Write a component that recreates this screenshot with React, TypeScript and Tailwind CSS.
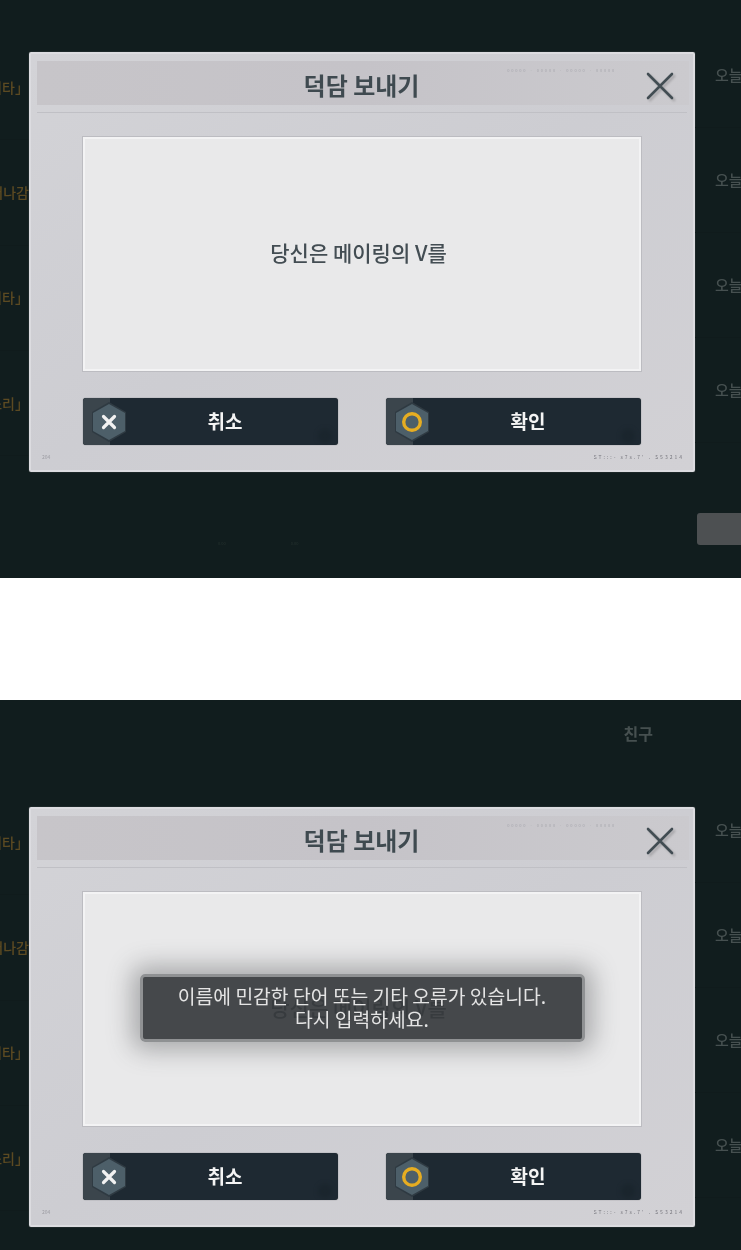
import React from "react";

function Hex({ kind }: { kind: "x" | "o" }) {
  return (
    <svg width="50" height="47" viewBox="0 0 50 47" className="shrink-0">
      <rect x="0" y="0" width="27" height="47" fill="#3b454c" />
      <polygon points="26,4 43,14 43,34 26,44 9,34 9,14" fill="#2f3a42" />
      <polygon points="26,6 42,15 42,33 26,42 10,33 10,15" fill="#4d5f69" />
      {kind === "x" ? (
        <path d="M20.5 18.5 L31.5 29.5 M31.5 18.5 L20.5 29.5" stroke="#f2f2f2" strokeWidth="3.2" strokeLinecap="round" />
      ) : (
        <circle cx="26" cy="24" r="8.3" fill="none" stroke="#e6ad22" strokeWidth="3.4" />
      )}
    </svg>
  );
}

function ActionButton({ kind, label }: { kind: "x" | "o"; label: string }) {
  return (
    <div className="relative flex h-[47px] w-[255px] items-center overflow-hidden rounded-[3px] bg-[#1e2932] shadow-[0_0_1px_#555]">
      <Hex kind={kind} />
      <span className="absolute bottom-[2px] right-[6px] h-[14px] w-[14px] rounded-full bg-[#1a252d] blur-[2px]" />
      <span className="flex-1 pr-[21px] text-center text-[19px] font-bold text-[#f4f4f4]">{label}</span>
    </div>
  );
}

function Modal({ toast }: { toast: boolean }) {
  return (
    <div className="box-border h-[420px] w-[666px] rounded-[2px] border-2 border-[#dcdce0] bg-gradient-to-br from-[#d3d3d7] via-[#cdcdd2] to-[#d2d1d5] shadow-[0_0_1px_#8a8d90]">
      <div className="ml-[6px] mr-[4px] mt-[7px] grid h-[44px] grid-cols-[1fr_auto_1fr] bg-gradient-to-r from-[#c7c5c9] via-[#c5c3c8] to-[#cbcace]">
        <div />
        <div className="pr-[3px] pt-[6px] text-[24px] font-bold leading-[36px] text-[#3f4a50]">덕담 보내기</div>
        <div className="flex items-start justify-end pr-[15px]">
          <span className="mr-[30px] mt-[5px] whitespace-nowrap text-[4px] leading-[8px] tracking-[1.8px] text-[#a8a8ae]">00000 · 00000 · 00000 · 00000</span>
          <svg width="28" height="28" viewBox="0 0 28 28" className="mt-[11px] drop-shadow-[2px_2px_1px_rgba(0,0,0,0.18)]">
            <path d="M2 2 L26 26 M26 2 L2 26" stroke="#424d53" strokeWidth="2.6" strokeLinecap="round" />
          </svg>
        </div>
      </div>
      <div className="mx-[6px] mt-[7px] h-px bg-[#c0c0c5]" />
      <div className="relative ml-[52px] mt-[24px] box-border flex h-[234px] w-[558px] items-center justify-center border-2 border-[#f3f3f4] bg-[#e9e9ea] pb-[2px] pr-[7px] text-[21px] font-medium text-[#434d53] shadow-[0_0_0_1px_#bcbcc1]">
        당신은 메이링의 V를
        {toast && (
          <div className="absolute inset-0 flex items-center justify-center pb-[3px]">
            <div className="box-border flex h-[68px] w-[445px] flex-col items-center justify-center rounded-[5px] border-[3px] border-[#8f9193] bg-[#36393d]/[0.92] text-[19.3px] font-normal leading-[23px] text-[#e4e4e4] shadow-[0_0_24px_8px_rgba(70,72,76,0.4)]">
              <span>이름에 민감한 단어 또는 기타 오류가 있습니다.</span>
              <span>다시 입력하세요.</span>
            </div>
          </div>
        )}
      </div>
      <div className="ml-[52px] mt-[27px] flex gap-[48px]">
        <ActionButton kind="x" label="취소" />
        <ActionButton kind="o" label="확인" />
      </div>
      <div className="mt-[8px] flex justify-between pl-[11px] pr-[9px] text-[5px] leading-[8px] text-[#9c9ca2]">
        <span>204</span>
        <span className="tracking-[2px] text-[#77777e]">ST:::- s7s.7' . S53214</span>
      </div>
    </div>
  );
}

const leftLabels = ["기타」", "떠나감", "기타」", "소리」"];

function Screen({ second }: { second: boolean }) {
  return (
    <div className={second ? "flex h-[550px] overflow-hidden bg-[#111d1e] blur-[0.4px]" : "flex h-[578px] overflow-hidden bg-[#111d1e] blur-[0.4px]"}>
      <div className={second ? "w-[29px] shrink-0 overflow-hidden pt-[90px]" : "w-[29px] shrink-0 overflow-hidden pt-[35px]"}>
        {leftLabels.map((t, i) => (
          <div key={i} className="flex h-[105.3px] items-center justify-end whitespace-nowrap border-b border-[#101b1c] text-[14px] font-medium text-[#5c4a22]">
            {t}
          </div>
        ))}
      </div>
      <div className="w-[666px] shrink-0">
        <div className={second ? "flex h-[107px] justify-end pr-[42px] pt-[22px]" : "h-[52px]"}>
          {second && <span className="text-[16px] font-bold leading-[22px] text-[#465050]">친구</span>}
        </div>
        <Modal toast={second} />
        <div className="ml-[189px] mt-[67px] flex gap-[65px] text-[4px] leading-[8px] text-[#26322f]">
          <span>0.00</span>
          <span>0.00</span>
        </div>
      </div>
      <div className={second ? "w-[46px] shrink-0 overflow-hidden pt-[78px]" : "w-[46px] shrink-0 overflow-hidden pt-[23px]"}>
        {["오늘", "오늘", "오늘", "오늘"].map((t, i) => (
          <div key={i} className="flex h-[105px] items-center whitespace-nowrap border-b border-[#101b1c] pl-[20px] text-[15px] font-medium text-[#465050]">
            {t}의 보상
          </div>
        ))}
        {!second && <div className="ml-[2px] mt-[70px] h-[32px] rounded-l-[3px] bg-[#4d5052]" />}
      </div>
    </div>
  );
}

export default function App() {
  return (
    <div className="h-[1250px] w-[741px] overflow-hidden bg-white font-['Noto_Sans_CJK_KR','Noto_Sans',sans-serif]">
      <Screen second={false} />
      <div className="h-[122px] bg-white" />
      <Screen second={true} />
    </div>
  );
}
